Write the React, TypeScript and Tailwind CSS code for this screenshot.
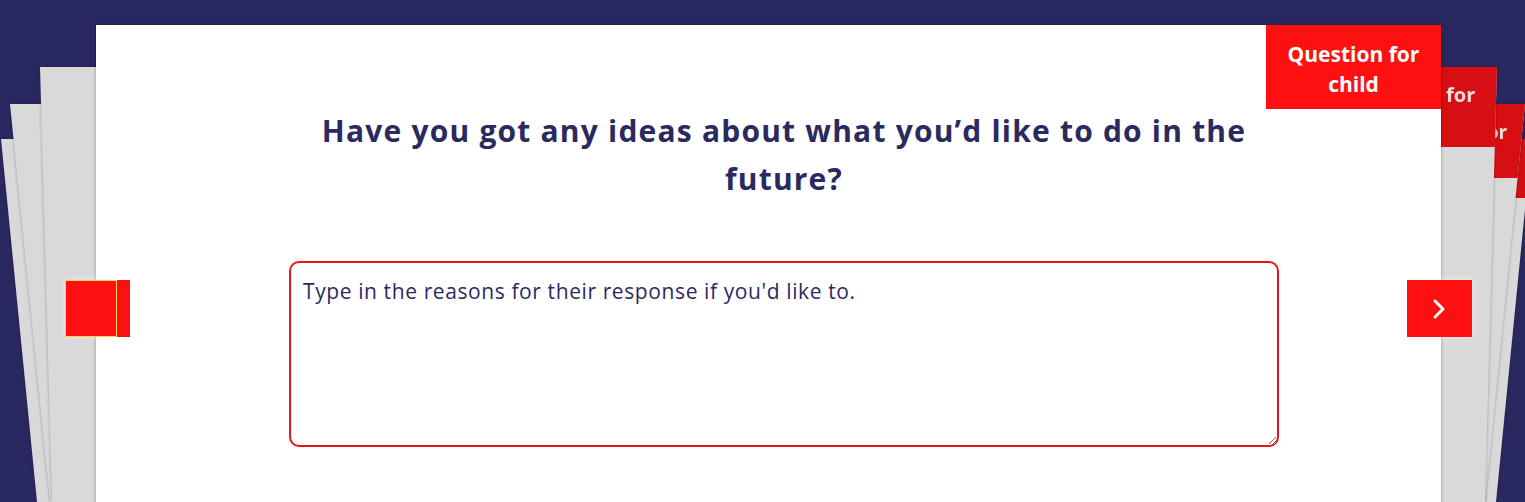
import React from "react";

function Label({
  className,
  size,
  leading,
  pt,
}: {
  className: string;
  size: string;
  leading: string;
  pt: string;
}) {
  return (
    <div
      className={`absolute top-0 w-[175px] flex justify-center text-center font-bold [font-family:'Open_Sans',sans-serif] ${className} ${size} ${leading} ${pt}`}
    >
      <span>
        Question for
        <br />
        child
      </span>
    </div>
  );
}

export default function App() {
  return (
    <div className="relative w-full h-[502px] overflow-hidden bg-[#2a2861] [font-family:'Open_Sans',Lato,sans-serif]">
      {/* back card C */}
      <div className="absolute left-[1px] top-[139px] w-[1531px] h-[363px] [filter:drop-shadow(0_0_1.5px_rgba(0,0,0,0.3))]">
        <div className="relative w-full h-full bg-[#d9d9d9] [clip-path:polygon(0_0,100%_0,calc(100%-36px)_100%,36px_100%)]">
          <div className="absolute right-0 top-[-36px] w-[175px] h-[95px] bg-[#d40f13]" />
        </div>
      </div>
      {/* back card B */}
      <div className="absolute left-[10px] top-[104px] w-[1515px] h-[398px] [filter:drop-shadow(0_0_1.5px_rgba(0,0,0,0.3))]">
        <div className="relative w-full h-full bg-[#d9d9d9] [clip-path:polygon(0_0,100%_0,calc(100%-40px)_100%,40px_100%)]">
          <Label
            className="right-[-10px] h-[74px] bg-[#d70f13] text-[#f3dcdc]"
            size="text-[19px]"
            leading="leading-[28px]"
            pt="pt-[14px]"
          />
        </div>
      </div>
      {/* back card A */}
      <div className="absolute left-[40px] top-[67px] w-[1457px] h-[435px] [filter:drop-shadow(0_0_1.5px_rgba(0,0,0,0.3))]">
        <div className="relative w-full h-full bg-[#d9d9d9] [clip-path:polygon(0_0,100%_0,calc(100%-12px)_100%,12px_100%)]">
          <Label
            className="right-[-3px] h-[80px] bg-[#d70f12] text-[#f3dcdc]"
            size="text-[20px]"
            leading="leading-[29px]"
            pt="pt-[13px]"
          />
        </div>
      </div>

      {/* main card */}
      <div className="relative ml-[96px] mt-[25px] w-[1345px] h-[500px] bg-white shadow-[0_0_3px_rgba(0,0,0,0.35)]">
        <Label
          className="right-0 h-[84px] bg-[#ff1010] text-white"
          size="text-[21px]"
          leading="leading-[30px]"
          pt="pt-[14px]"
        />

        <div className="pl-[193px] pt-[82px] w-[1183px] flex flex-col">
          <h1 className="text-center text-[#2b2a5f] font-bold text-[30px] leading-[48px] tracking-[1.2px] [font-family:'Open_Sans',sans-serif]">
            Have you got any ideas about what you’d like to do in the
            <br />
            future?
          </h1>
          <textarea
            className="mt-[58px] w-[990px] h-[186px] border-2 border-[#e3161c] rounded-[10px] px-[12px] pt-[14px] text-[21px] leading-[28px] tracking-[0.6px] text-[#2b2a5f] placeholder:text-[#2b2a5f] outline-none bg-white resize-y [font-family:'Open_Sans',sans-serif]"
            placeholder="Type in the reasons for their response if you'd like to."
          />
        </div>

        {/* prev button */}
        <div className="absolute left-[-31px] top-[255px] w-[65px] h-[57px] bg-[#ff1010] shadow-[0_0_6px_rgba(255,255,255,0.6)]">
          <div className="w-[52px] h-[57px] border border-[#f3d54a]" />
        </div>

        {/* next button */}
        <button className="absolute left-[1311px] top-[255px] w-[65px] h-[57px] bg-[#ff1010] flex items-center justify-center shadow-[0_0_6px_rgba(255,255,255,0.6)]">
          <svg width="15" height="22" viewBox="0 0 15 22" fill="none">
            <polyline points="3,3 11,11 3,19" stroke="white" strokeWidth="3" strokeLinecap="round" strokeLinejoin="round" />
          </svg>
        </button>
      </div>
    </div>
  );
}
